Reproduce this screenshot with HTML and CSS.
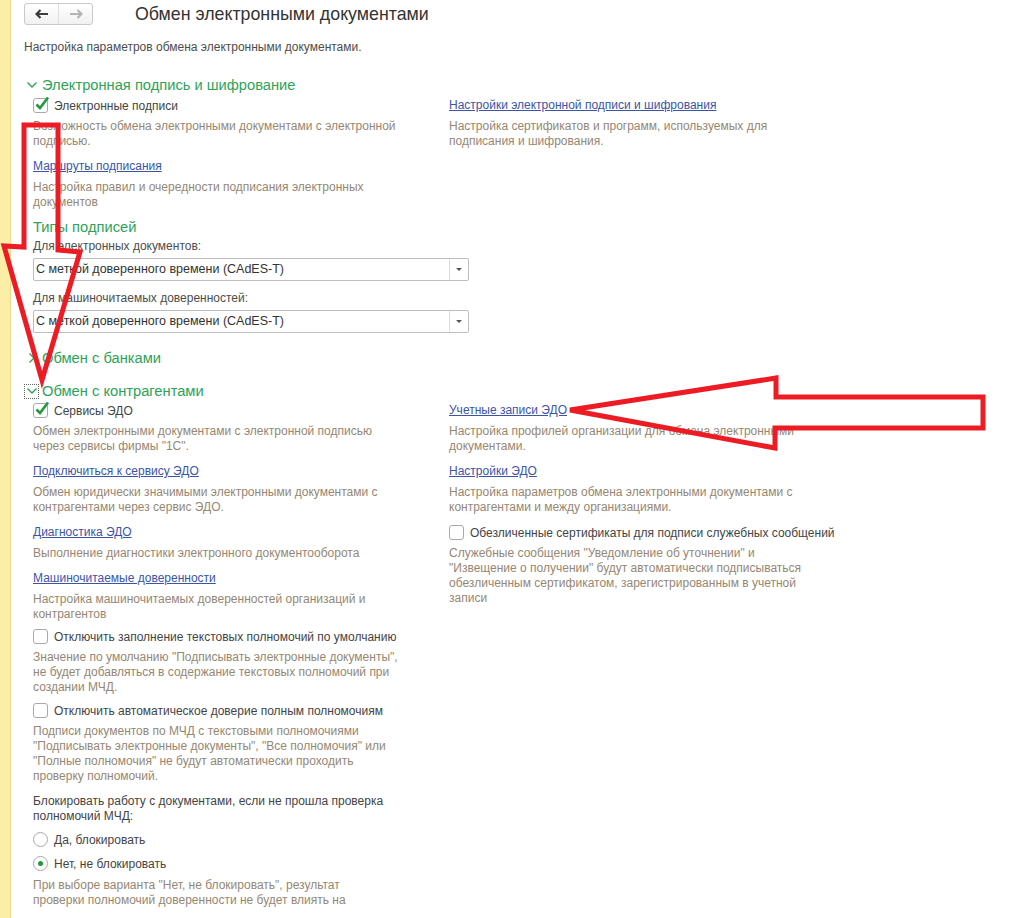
FILE: index.html
```html
<!DOCTYPE html>
<html lang="ru">
<head>
<meta charset="utf-8">
<title>Обмен электронными документами</title>
<link rel="stylesheet" href="styles.css">
</head>
<body>
<div class="page">
  <div class="strip"></div>
  <div class="main">
    <div class="header">
      <div class="navbtns">
        <span class="nb"><svg width="14" height="10" viewBox="0 0 14 10"><path d="M1 5H13M5.5 1L1.5 5L5.5 9" fill="none" stroke="#3c3c3c" stroke-width="2.2"/></svg></span>
        <span class="nb"><svg width="14" height="10" viewBox="0 0 14 10"><path d="M1 5H13M8.5 1L12.5 5L8.5 9" fill="none" stroke="#b4b4b4" stroke-width="2.2"/></svg></span>
      </div>
      <h1 class="title">Обмен электронными документами</h1>
    </div>
    <p class="intro">Настройка параметров обмена электронными документами.</p>

    <section class="group first">
      <div class="group-head"><span class="chev"><svg width="12" height="8" viewBox="0 0 12 8"><path d="M1.5 1.5L6 6L10.5 1.5" fill="none" stroke="#2ea358" stroke-width="1.4"/></svg></span>Электронная подпись и шифрование</div>
      <div class="cols">
        <div class="col left">
          <div class="item">
            <label class="check"><span class="box"><svg class="tick" width="18" height="18" viewBox="0 0 18 18"><path d="M3.5 9.5L7 13L15 2.5" fill="none" stroke="#1f9a3c" stroke-width="2.6"/></svg></span>Электронные подписи</label>
            <p class="desc">Возможность обмена электронными документами с электронной<br>подписью.</p>
          </div>
          <div class="item">
            <a class="link" href="#">Маршруты подписания</a>
            <p class="desc">Настройка правил и очередности подписания электронных<br>документов</p>
          </div>
          <div class="subhead">Типы подписей</div>
          <div class="field-label">Для электронных документов:</div>
          <div class="select"><span class="select-val">С меткой доверенного времени (CAdES-T)</span><span class="select-btn"><span class="tri"></span></span></div>
          <div class="field-label">Для машиночитаемых доверенностей:</div>
          <div class="select"><span class="select-val">С меткой доверенного времени (CAdES-T)</span><span class="select-btn"><span class="tri"></span></span></div>
        </div>
        <div class="col right">
          <div class="item">
            <a class="link" href="#">Настройки электронной подписи и шифрования</a>
            <p class="desc">Настройка сертификатов и программ, используемых для<br>подписания и шифрования.</p>
          </div>
        </div>
      </div>
    </section>

    <section class="group banks">
      <div class="group-head"><span class="chev"><svg width="12" height="12" viewBox="0 0 12 12"><path d="M3.5 1.5L8 6L3.5 10.5" fill="none" stroke="#2ea358" stroke-width="1.4"/></svg></span>Обмен с банками</div>
    </section>

    <section class="group partners">
      <div class="group-head"><span class="chev focus"><svg width="12" height="8" viewBox="0 0 12 8"><path d="M1.5 1.5L6 6L10.5 1.5" fill="none" stroke="#2ea358" stroke-width="1.4"/></svg></span>Обмен с контрагентами</div>
      <div class="cols">
        <div class="col left">
          <div class="item">
            <label class="check"><span class="box"><svg class="tick" width="18" height="18" viewBox="0 0 18 18"><path d="M3.5 9.5L7 13L15 2.5" fill="none" stroke="#1f9a3c" stroke-width="2.6"/></svg></span>Сервисы ЭДО</label>
            <p class="desc">Обмен электронными документами с электронной подписью<br>через сервисы фирмы "1С".</p>
          </div>
          <div class="item">
            <a class="link" href="#">Подключиться к сервису ЭДО</a>
            <p class="desc">Обмен юридически значимыми электронными документами с<br>контрагентами через сервис ЭДО.</p>
          </div>
          <div class="item">
            <a class="link" href="#">Диагностика ЭДО</a>
            <p class="desc">Выполнение диагностики электронного документооборота</p>
          </div>
          <div class="item">
            <a class="link" href="#">Машиночитаемые доверенности</a>
            <p class="desc">Настройка машиночитаемых доверенностей организаций и<br>контрагентов</p>
          </div>
          <div class="item cb">
            <label class="check"><span class="box"></span>Отключить заполнение текстовых полномочий по умолчанию</label>
            <p class="desc">Значение по умолчанию "Подписывать электронные документы",<br>не будет добавляться в содержание текстовых полномочий при<br>создании МЧД.</p>
          </div>
          <div class="item cb2">
            <label class="check"><span class="box"></span>Отключить автоматическое доверие полным полномочиям</label>
            <p class="desc">Подписи документов по МЧД с текстовыми полномочиями<br>"Подписывать электронные документы", "Все полномочия" или<br>"Полные полномочия" не будут автоматически проходить<br>проверку полномочий.</p>
          </div>
          <p class="plain">Блокировать работу с документами, если не прошла проверка<br>полномочий МЧД:</p>
          <label class="radio"><span class="circle"></span>Да, блокировать</label>
          <label class="radio"><span class="circle on"></span>Нет, не блокировать</label>
          <p class="desc">При выборе варианта "Нет, не блокировать", результат<br>проверки полномочий доверенности не будет влиять на</p>
        </div>
        <div class="col right">
          <div class="item">
            <a class="link" href="#">Учетные записи ЭДО</a>
            <p class="desc">Настройка профилей организации для обмена электронными<br>документами.</p>
          </div>
          <div class="item">
            <a class="link" href="#">Настройки ЭДО</a>
            <p class="desc">Настройка параметров обмена электронными документами с<br>контрагентами и между организациями.</p>
          </div>
          <div class="item">
            <label class="check"><span class="box"></span>Обезличенные сертификаты для подписи служебных сообщений</label>
            <p class="desc">Служебные сообщения "Уведомление об уточнении" и<br>"Извещение о получении" будут автоматически подписываться<br>обезличенным сертификатом, зарегистрированным в учетной<br>записи</p>
          </div>
        </div>
      </div>
    </section>
  </div>
</div>

<svg class="annot" width="1024" height="918" viewBox="0 0 1024 918">
  <polygon points="24,125 58,125 58,250 80,252 42,380 4,246 24,247" fill="none" stroke="#ed1c24" stroke-width="5" stroke-linejoin="miter"/>
  <polygon points="570,410 776,378 776,397 983,397 983,428 775,428 775,448" fill="none" stroke="#ed1c24" stroke-width="5" stroke-linejoin="miter"/>
</svg>
</body>
</html>
```

FILE: styles.css
```css
* { box-sizing: border-box; }
html, body { margin: 0; padding: 0; background: #fff; }
body {
  font-family: "Liberation Sans", Arial, sans-serif;
  font-size: 12px;
  color: #444;
  width: 1024px;
  height: 918px;
  overflow: hidden;
  position: relative;
}
p { margin: 0; }

.page { display: flex; min-height: 918px; }
.strip {
  width: 11px;
  flex: none;
  background: #fbeea6;
  border-right: 1px solid #efdc8a;
}
.main { flex: 1; padding-left: 13px; }

.header { display: flex; align-items: flex-start; height: 28px; padding-top: 3px; }
.navbtns {
  display: flex;
  width: 69px;
  height: 22px;
  border: 1px solid #c9c9c9;
  border-radius: 3px;
  background: linear-gradient(#ffffff, #f1f1f1);
}
.nb { flex: 1; display: flex; align-items: center; justify-content: center; }
.nb + .nb { border-left: 1px solid #dedede; }
.title {
  margin: 0 0 0 42px;
  font-size: 17.8px;
  font-weight: normal;
  color: #333;
  line-height: 22px;
}

.intro { margin-top: 12px; line-height: 15px; color: #4d4d4d; }

.group.first { margin-top: 21px; }
.group.banks { margin-top: 16px; }
.group.partners { margin-top: 15px; }
.group-head {
  display: flex;
  align-items: center;
  height: 18px;
  font-size: 14.7px;
  color: #2ea358;
}
.chev {
  width: 15px;
  height: 15px;
  margin-right: 3px;
  display: flex;
  align-items: center;
  justify-content: center;
}
.chev.focus { border: 1px dotted #666; }

.cols { display: grid; grid-template-columns: 425px 1fr; margin-top: 3px; }
.group.first .cols { margin-top: 4px; }
.col.left { padding-left: 9px; }

.item { margin-bottom: 10px; }
.item.cb { margin-top: -3px; }
.item.cb2 { margin-top: -2px; }
.desc { margin-top: 6px; line-height: 15px; color: #958773; }
.link { display: block; line-height: 15px; height: 15px; color: #3b54a6; text-decoration: underline; }

.check, .radio { display: flex; align-items: center; height: 15px; color: #444; }
.box {
  position: relative;
  width: 15px;
  height: 15px;
  flex: none;
  margin-right: 6px;
  border: 1px solid #a9a9a9;
  border-radius: 3px;
  background: #fff;
}
.tick { position: absolute; left: -1px; top: -4px; }

.subhead { font-size: 14.7px; color: #2ea358; line-height: 18px; height: 18px; margin-top: -2px; }
.field-label { line-height: 15px; margin-top: 3px; color: #4d4d4d; }
.select {
  display: flex;
  width: 436px;
  height: 23px;
  margin-top: 4px;
  margin-bottom: 10px;
  border: 1px solid #bdbdbd;
  border-radius: 2px;
  background: #fff;
}
.select:last-child { margin-bottom: 0; }
.select-val { flex: 1; padding-left: 2px; line-height: 21px; color: #333; font-size: 12.5px; }
.select-btn {
  width: 19px;
  border-left: 1px solid #dcdcdc;
  display: flex;
  align-items: center;
  justify-content: center;
}
.tri {
  width: 0; height: 0;
  border-left: 3px solid transparent;
  border-right: 3px solid transparent;
  border-top: 3px solid #555;
}

.plain { line-height: 15px; color: #444; margin-top: 1px; margin-bottom: 8px; }
.radio { margin-bottom: 9px; }
.circle {
  width: 15px;
  height: 15px;
  margin-right: 6px;
  border: 1px solid #a9a9a9;
  border-radius: 50%;
  display: flex;
  align-items: center;
  justify-content: center;
  flex: none;
}
.circle.on::after {
  content: "";
  width: 5px;
  height: 5px;
  border-radius: 50%;
  background: #1f9a3c;
}
.radio + .desc { margin-top: -2px; }

.annot { position: absolute; left: 0; top: 0; pointer-events: none; }
```
